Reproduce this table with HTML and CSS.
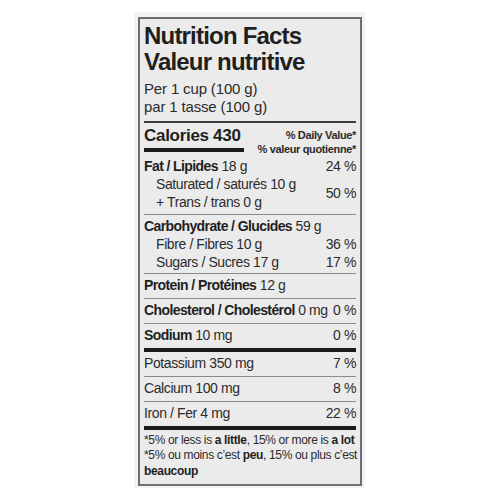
FILE: index.html
```html
<!DOCTYPE html>
<html>
<head>
<meta charset="utf-8">
<link rel="stylesheet" href="styles.css">
</head>
<body>
<div class="frame">
  <div class="label">
    <div class="title">Nutrition Facts<br>Valeur nutritive</div>
    <div class="serving">Per 1 cup (100 g)<br>par 1 tasse (100 g)</div>
    <div class="rule"></div>
    <div class="cal-head">
      <div class="cal">
        <div class="cal-text">Calories 430</div>
        <div class="cal-bar"></div>
      </div>
      <div class="dv">% Daily Value*<br>% valeur quotienne*</div>
    </div>
    <div class="group fat">
      <div class="row"><span><b>Fat / Lipides</b> 18 g</span><span>24 %</span></div>
      <div class="pair">
        <div class="sub">
          <div>Saturated / saturés 10 g</div>
          <div>+ Trans / trans 0 g</div>
        </div>
        <span>50 %</span>
      </div>
    </div>
    <div class="group carb">
      <div class="row"><span><b>Carbohydrate / Glucides</b> 59 g</span></div>
      <div class="row ind"><span>Fibre / Fibres 10 g</span><span>36 %</span></div>
      <div class="row ind"><span>Sugars / Sucres 17 g</span><span>17 %</span></div>
    </div>
    <div class="item"><span><b>Protein / Protéines</b> 12 g</span></div>
    <div class="item"><span><b>Cholesterol / Cholestérol</b> 0 mg</span><span>0 %</span></div>
    <div class="item last"><span><b>Sodium</b> 10 mg</span><span>0 %</span></div>
    <div class="bar"></div>
    <div class="item"><span>Potassium 350 mg</span><span>7 %</span></div>
    <div class="item"><span>Calcium 100 mg</span><span>8 %</span></div>
    <div class="item last"><span>Iron / Fer 4 mg</span><span>22 %</span></div>
    <div class="bar"></div>
    <div class="foot">
      <div class="fline">*5% or less is <b>a little</b>, 15% or more is <b>a lot</b></div>
      <div class="fline">*5% ou moins c’est <b>peu</b>, 15% ou plus c’est</div>
      <div class="fline"><b>beaucoup</b></div>
    </div>
  </div>
</div>
</body>
</html>
```

FILE: styles.css
```css
html, body {
  margin: 0;
  padding: 0;
  background: #ffffff;
}
body {
  font-family: "Liberation Sans", Arial, sans-serif;
  color: #222222;
}
.frame {
  margin: 12px 0 0 134px;
  width: 231px;
  height: 476px;
  box-sizing: border-box;
  padding: 5px 3px 2px 4px;
  background: #f3f3f3;
}
.label {
  box-sizing: border-box;
  width: 224px;
  height: 469px;
  border: 2px solid #6e6e6e;
  background: #ebebeb;
  padding: 0 4px;
}
.title {
  padding-top: 4px;
  font-size: 24px;
  line-height: 26px;
  font-weight: bold;
  letter-spacing: -0.8px;
  color: #1f1f1f;
}
.serving {
  margin-top: 5px;
  font-size: 15px;
  line-height: 18px;
  letter-spacing: -0.15px;
  color: #2a2a2a;
}
.rule {
  margin-top: 5px;
  height: 2px;
  background: #3c3c3c;
}
.cal-head {
  display: flex;
  justify-content: space-between;
  align-items: flex-start;
  padding-top: 3px;
}
.cal-text {
  font-size: 17px;
  line-height: 20px;
  font-weight: bold;
  letter-spacing: -0.3px;
  color: #1f1f1f;
}
.cal-bar {
  margin-top: 2px;
  width: 100px;
  height: 4px;
  background: #1c1c1c;
}
.dv {
  margin-top: 1.5px;
  font-size: 11px;
  line-height: 14px;
  font-weight: bold;
  letter-spacing: -0.35px;
  text-align: right;
  color: #2a2a2a;
}
.group {
  border-bottom: 1px solid #8a8a8a;
  font-size: 14px;
  line-height: 18px;
  letter-spacing: -0.4px;
  color: #2c2c2c;
}
.fat {
  padding: 1px 0 3px;
}
.carb {
  padding: 2px 0 2px;
}
b {
  font-weight: bold;
  letter-spacing: -0.6px;
  color: #1f1f1f;
}
.row, .item, .pair {
  display: flex;
  justify-content: space-between;
}
.pair {
  align-items: center;
}
.sub, .ind {
  padding-left: 12px;
}
.item {
  padding: 2px 0 4px;
  border-bottom: 1px solid #8a8a8a;
  font-size: 14px;
  line-height: 18px;
  letter-spacing: -0.4px;
  color: #2c2c2c;
}
.item.last {
  border-bottom: none;
}
.bar {
  height: 4px;
  background: #1c1c1c;
}
.foot {
  margin-top: 3px;
  font-size: 12px;
  line-height: 15.5px;
  letter-spacing: -0.35px;
  color: #2c2c2c;
}
.fline {
  white-space: nowrap;
}
.foot b {
  letter-spacing: -0.35px;
}
```
